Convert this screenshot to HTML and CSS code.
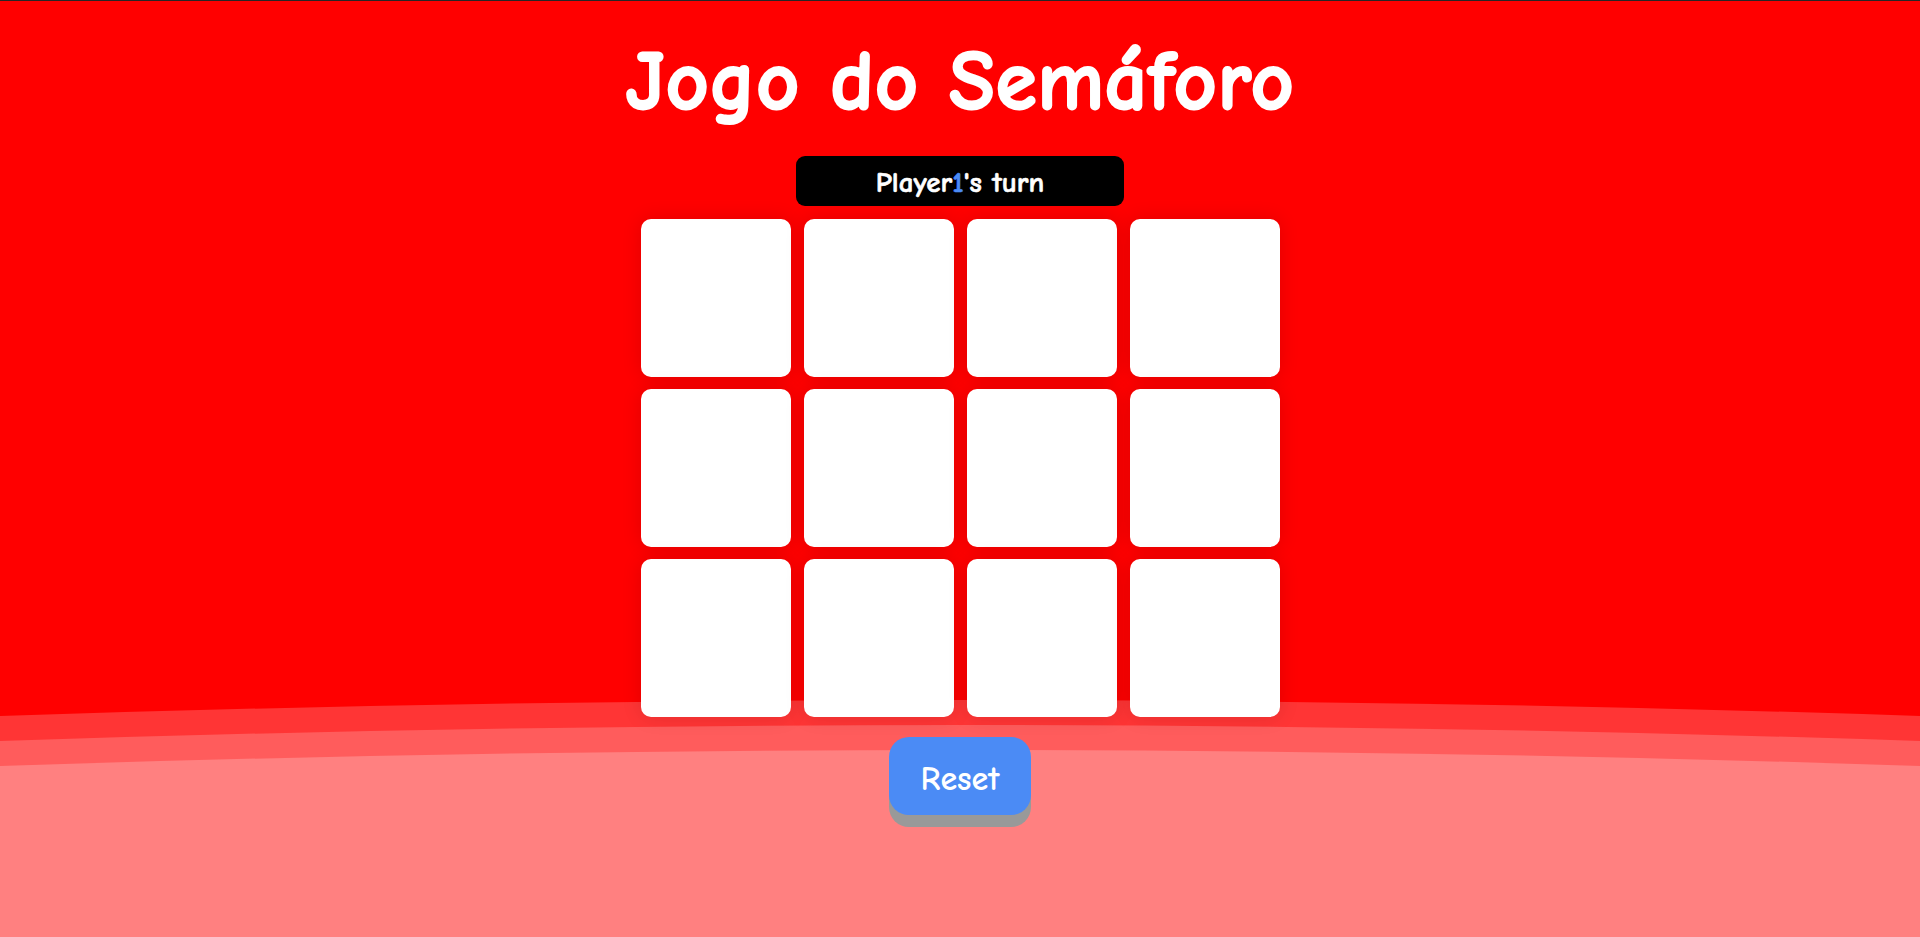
FILE: index.html
```html
<!DOCTYPE html>
<html lang="pt">
<head>
<meta charset="utf-8">
<title>Jogo do Semáforo</title>
<link rel="stylesheet" href="styles.css">
</head>
<body>
<svg class="waves" viewBox="0 0 1920 937" preserveAspectRatio="none" aria-hidden="true">
  <path class="w1" d="M0 716 Q960 684 1920 716 V937 H0 Z"/>
  <path class="w2" d="M0 741 Q960 709 1920 741 V937 H0 Z"/>
  <path class="w3" d="M0 766 Q960 734 1920 766 V937 H0 Z"/>
</svg>
<main class="game">
  <h1 class="title">Jogo do Semáforo</h1>
  <div class="turn">Player<span class="num">1</span>'s turn</div>
  <div class="board">
    <div class="cell"></div><div class="cell"></div><div class="cell"></div><div class="cell"></div>
    <div class="cell"></div><div class="cell"></div><div class="cell"></div><div class="cell"></div>
    <div class="cell"></div><div class="cell"></div><div class="cell"></div><div class="cell"></div>
  </div>
  <button class="reset" type="button">Reset</button>
</main>
</body>
</html>
```
FILE: styles.css
```css
html, body {
  margin: 0;
  padding: 0;
  height: 100%;
}
body {
  background: #ff0000;
  border-top: 1px solid #262626;
  box-sizing: border-box;
  font-family: "Comic Sans MS", "Comic Sans", "Comic Neue", cursive;
  color: #fff;
  overflow: hidden;
  position: relative;
}
.waves {
  position: absolute;
  left: 0;
  top: -1px;
  width: 1920px;
  height: 937px;
  z-index: 0;
}
.w1 { fill: #ff3535; }
.w2 { fill: #ff5c5c; }
.w3 { fill: #ff8080; }
.game {
  position: relative;
  z-index: 1;
  display: flex;
  flex-direction: column;
  align-items: center;
}
.title {
  margin: 31px 0 24px;
  font-size: 84px;
  line-height: 100px;
  font-weight: bold;
  letter-spacing: 0.5px;
  -webkit-text-stroke: 2px #fff;
}
.turn {
  width: 328px;
  height: 50px;
  box-sizing: border-box;
  padding-top: 3px;
  background: #000;
  border-radius: 9px;
  display: flex;
  align-items: center;
  justify-content: center;
  font-size: 29px;
  font-weight: bold;
  -webkit-text-stroke: 0.6px currentColor;
}
.num { color: #4b8bf5; }
.board {
  margin-top: 13px;
  display: grid;
  grid-template-columns: repeat(4, 150px);
  grid-auto-rows: 158px;
  column-gap: 13px;
  row-gap: 12px;
}
.cell {
  background: #fff;
  border-radius: 10px;
  box-shadow: 0 0 20px rgba(0, 0, 0, 0.12);
}
.reset {
  margin-top: 20px;
  width: 142px;
  height: 78px;
  padding: 6px 0 0;
  border: none;
  border-radius: 20px;
  background: #4b8bf5;
  color: #fff;
  font-family: inherit;
  font-size: 34px;
  font-weight: bold;
  box-shadow: 0 12px 0 #999;
  cursor: pointer;
}
```
